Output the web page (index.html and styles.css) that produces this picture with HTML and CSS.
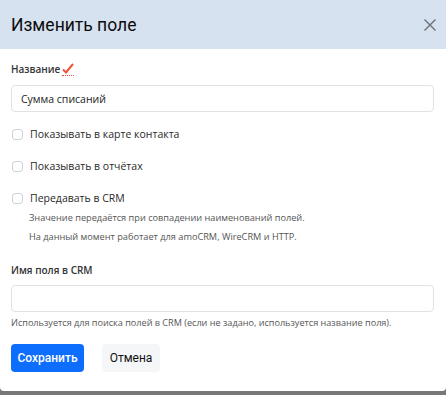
FILE: index.html
```html
<!DOCTYPE html>
<html lang="ru">
<head>
<meta charset="utf-8">
<link rel="stylesheet" href="styles.css">
</head>
<body>
<div class="modal">
  <div class="modal-header">
    <h1 class="modal-title">Изменить поле</h1>
    <span class="close">
      <svg width="12" height="12" viewBox="0 0 12 12"><path d="M0.5 0.5L11.5 11.5M11.5 0.5L0.5 11.5" stroke="#6c7075" stroke-width="1.4" fill="none"/></svg>
    </span>
  </div>
  <div class="modal-body">
    <div class="label">Название <span class="req"><svg width="12" height="11" viewBox="0 0 12 11"><path d="M1 6.5L4 9.5L11 1" stroke="#f0523c" stroke-width="2" fill="none"/></svg></span></div>
    <div class="input">Сумма списаний</div>
    <div class="check first"><span class="box"></span>Показывать в карте контакта</div>
    <div class="check"><span class="box"></span>Показывать в отчётах</div>
    <div class="check"><span class="box"></span>Передавать в CRM</div>
    <div class="hint">Значение передаётся при совпадении наименований полей.</div>
    <div class="hint">На данный момент работает для amoCRM, WireCRM и HTTP.</div>
    <div class="label second">Имя поля в CRM</div>
    <div class="input"></div>
    <div class="help">Используется для поиска полей в CRM (если не задано, используется название поля).</div>
    <div class="actions">
      <button class="btn primary">Сохранить</button>
      <button class="btn secondary">Отмена</button>
    </div>
  </div>
</div>
</body>
</html>
```
FILE: styles.css
```css
html, body {
  margin: 0;
  padding: 0;
  background: #777777;
  height: 395px;
  overflow: hidden;
}
body {
  font-family: "Open Sans", "Noto Sans", sans-serif;
  color: #212529;
}
.modal {
  width: 446px;
  height: 391px;
  background: #fff;
  border-radius: 0 0 4px 4px;
  box-sizing: border-box;
}
.modal-header {
  height: 49px;
  background: #d7e2f1;
  display: flex;
  align-items: center;
  justify-content: space-between;
  padding: 0 10px 0 11px;
}
.modal-title {
  margin: 0;
  font-family: Roboto, "Liberation Sans", Arial, sans-serif;
  font-weight: 400;
  font-size: 17.5px;
  color: #0c0c0c;
}
.close {
  display: flex;
  width: 12px;
  height: 12px;
  margin-right: 0;
}
.modal-body {
  padding: 12px 12px 0 11px;
  display: flex;
  flex-direction: column;
}
.label {
  font-size: 10px;
  font-weight: 600;
  line-height: 16px;
  color: #333;
  display: flex;
  align-items: center;
  gap: 2px;
}
.label.second {
  margin-top: 18px;
}
.req {
  display: inline-flex;
  border-bottom: 1px dotted #f0523c;
  padding-bottom: 1px;
}
.input {
  margin-top: 8px;
  height: 27px;
  box-sizing: border-box;
  border: 1px solid #dfe2e6;
  border-radius: 4px;
  padding: 0 9px;
  font-size: 10.5px;
  display: flex;
  align-items: center;
  color: #222;
}
.label.second + .input {
  margin-top: 7px;
}
.check {
  display: flex;
  align-items: center;
  font-size: 10.5px;
  font-weight: 500;
  color: #2a2a2a;
  margin-top: 16px;
  line-height: 16px;
}
.check.first {
  margin-top: 14px;
}
.box {
  width: 9px;
  height: 9px;
  border: 1px solid #cfd3d8;
  border-radius: 3px;
  margin-right: 7px;
  margin-left: 1px;
}
.hint {
  font-size: 9.2px;
  color: #555;
  margin-left: 18px;
  margin-top: 5px;
  line-height: 14px;
}
.help {
  font-size: 9.1px;
  color: #555;
  margin-top: 4px;
  line-height: 14px;
}
.actions {
  display: flex;
  gap: 18px;
  margin-top: 14px;
}
.btn {
  height: 28px;
  border: 0;
  border-radius: 4px;
  font-family: Roboto, "Liberation Sans", Arial, sans-serif;
  font-size: 12px;
  padding: 0;
}
.primary {
  background: #0d6efd;
  color: #fff;
  width: 73px;
  font-weight: 500;
}
.secondary {
  background: #f5f6f8;
  color: #111;
  width: 58px;
}
```
